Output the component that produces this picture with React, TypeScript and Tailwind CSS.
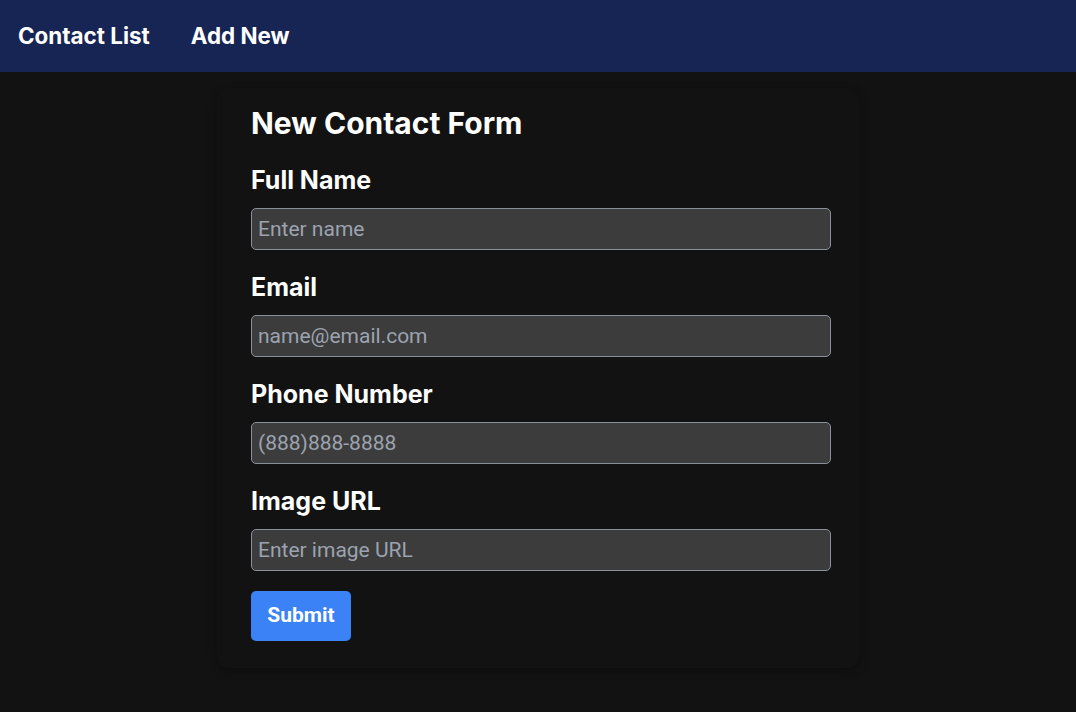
const fields = [
  { id: 'name', label: 'Full Name', placeholder: 'Enter name' },
  { id: 'email', label: 'Email', placeholder: 'name@email.com' },
  { id: 'phone', label: 'Phone Number', placeholder: '(888)888-8888' },
  { id: 'image', label: 'Image URL', placeholder: 'Enter image URL' },
];

const App = () => {
  return (
    <div className="min-h-screen bg-[#121212] font-['Inter',sans-serif] text-white">
      <nav className="flex h-[72px] items-center gap-[41px] bg-[#172554] px-[18px]">
        <a className="text-[22.4px] font-bold">Contact List</a>
        <a className="text-[22.4px] font-bold">Add New</a>
      </nav>

      <div className="mx-auto mt-[16px] w-[642px] rounded-xl bg-[#121212] pb-[27px] pl-[34px] pr-[28px] pt-[17px] shadow-[0_3px_10px_rgba(0,0,0,0.3)]">
        <h1 className="text-[30px] font-bold leading-[36px]">New Contact Form</h1>
        <form className="mt-[23px]">
          {fields.map((f) => (
            <div key={f.id} className="mb-[21px]">
              <label htmlFor={f.id} className="block text-[25px] font-bold leading-[32px]">
                {f.label}
              </label>
              <input
                id={f.id}
                placeholder={f.placeholder}
                className="mt-[12px] block h-[42px] w-[580px] rounded-[5px] border border-[#8a8f98] bg-[#3c3c3c] px-[6px] font-['Roboto',sans-serif] text-[21px] text-white placeholder:text-[#9ca3af]"
              />
            </div>
          ))}
          <button
            type="button"
            className="mt-[-1px] h-[50px] w-[100px] rounded-[5px] bg-[#3b82f6] font-['Roboto',sans-serif] text-[21px] font-bold"
          >
            Submit
          </button>
        </form>
      </div>
    </div>
  );
};

export default App;
